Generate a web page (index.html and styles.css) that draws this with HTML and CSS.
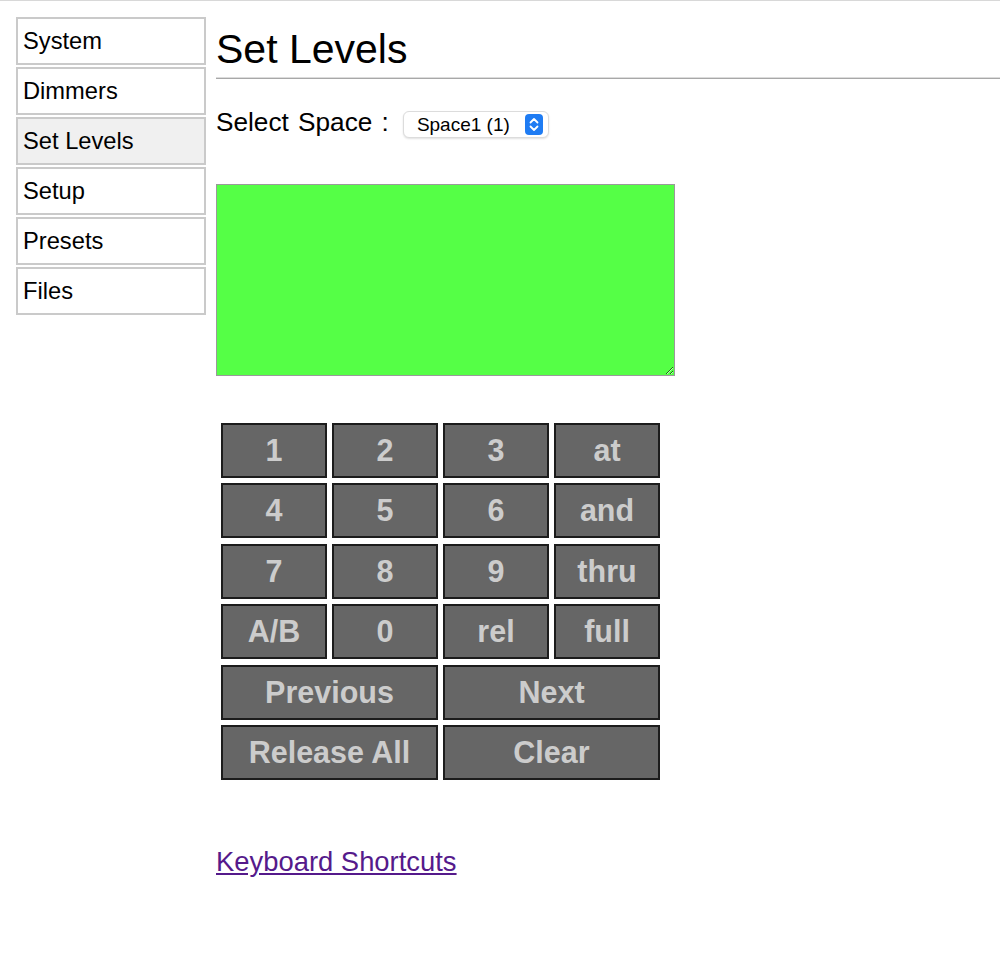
FILE: index.html
```html
<!DOCTYPE html>
<html lang="en">
<head>
    <meta charset="UTF-8">
    <meta name="viewport" content="width=device-width, initial-scale=1.0">
    <title>Set Levels</title>
    <link rel="stylesheet" href="styles.css">
</head>
<body>
    <div class="page">
        <ul class="nav">
            <li><a href="#">System</a></li>
            <li><a href="#">Dimmers</a></li>
            <li class="active"><a href="#">Set Levels</a></li>
            <li><a href="#">Setup</a></li>
            <li><a href="#">Presets</a></li>
            <li><a href="#">Files</a></li>
        </ul>
        <div class="main">
            <h1>Set Levels</h1>
            <hr>
            <div class="space-row">
                <label for="space">Select Space :</label>
                <div class="select-wrap">
                    <select id="space">
                        <option>Space1 (1)</option>
                    </select>
                    <svg class="stepper" width="18" height="21" viewBox="0 0 18 21">
                        <rect x="0" y="0" width="18" height="21" rx="4" fill="#1f7cf3"/>
                        <path d="M5.5 8.5 L9 5 L12.5 8.5" fill="none" stroke="#fff" stroke-width="1.8" stroke-linecap="round" stroke-linejoin="round"/>
                        <path d="M5.5 12.5 L9 16 L12.5 12.5" fill="none" stroke="#fff" stroke-width="1.8" stroke-linecap="round" stroke-linejoin="round"/>
                    </svg>
                </div>
            </div>
            <textarea class="display"></textarea>
            <div class="keypad">
                <button>1</button>
                <button>2</button>
                <button>3</button>
                <button>at</button>
                <button>4</button>
                <button>5</button>
                <button>6</button>
                <button>and</button>
                <button>7</button>
                <button>8</button>
                <button>9</button>
                <button>thru</button>
                <button>A/B</button>
                <button>0</button>
                <button>rel</button>
                <button>full</button>
                <button class="wide">Previous</button>
                <button class="wide">Next</button>
                <button class="wide">Release All</button>
                <button class="wide">Clear</button>
            </div>
            <a class="shortcuts" href="#">Keyboard Shortcuts</a>
        </div>
    </div>
</body>
</html>
```

FILE: styles.css
```css
body {
    margin: 0;
    font-family: "Liberation Sans", Arial, sans-serif;
    color: #000;
    background: #fff;
    border-top: 1px solid #d8d8d8;
    overflow: hidden;
}
.page {
    display: flex;
    align-items: flex-start;
}
.nav {
    list-style: none;
    margin: 16px 0 0 16px;
    padding: 0;
    width: 190px;
    display: flex;
    flex-direction: column;
    gap: 2px;
    flex-shrink: 0;
}
.nav li {
    height: 44px;
    border: 2px solid #cacaca;
    display: flex;
    align-items: center;
    padding-left: 5px;
}
.nav li.active {
    background: #f0f0f0;
}
.nav a {
    color: #000;
    text-decoration: none;
    font-size: 23.7px;
}
.main {
    flex: 1;
    margin-left: 10px;
    padding-top: 25px;
}
h1 {
    margin: 0;
    font-size: 41px;
    font-weight: normal;
    line-height: 47px;
}
hr {
    margin: 4px 0 0 0;
    border: none;
    border-top: 1px solid #dcdcdc;
    border-bottom: 1px solid #a8a8a8;
}
.space-row {
    margin-top: 28px;
    display: flex;
    align-items: center;
    gap: 14px;
    height: 30px;
}
.space-row label {
    font-size: 26.2px;
    line-height: 30px;
    word-spacing: 2px;
}
.select-wrap {
    position: relative;
    margin-top: 4px;
}
.select-wrap select {
    appearance: none;
    -webkit-appearance: none;
    width: 146px;
    height: 27px;
    padding: 0 0 0 13px;
    border: 1px solid #dcdcdc;
    border-radius: 6px;
    background: #fff;
    box-shadow: 0 1px 2px rgba(0, 0, 0, 0.12);
    font-family: "Liberation Sans", Arial, sans-serif;
    font-size: 19px;
    color: #000;
}
.stepper {
    position: absolute;
    right: 6px;
    top: 3px;
    pointer-events: none;
}
.display {
    display: block;
    margin-top: 47px;
    width: 459px;
    height: 192px;
    box-sizing: border-box;
    background: #55ff46;
    border: 1px solid #9a9a9a;
    padding: 2px;
}
.keypad {
    margin: 47px 0 0 5px;
    display: grid;
    grid-template-columns: repeat(4, 106px);
    grid-auto-rows: 55px;
    column-gap: 5px;
    row-gap: 5.4px;
}
.keypad button {
    background: #666;
    color: #cccccc;
    border: 2px solid #1c1c1c;
    font-family: "Liberation Sans", Arial, sans-serif;
    font-weight: bold;
    font-size: 30.5px;
    padding: 0;
    cursor: pointer;
}
.keypad button.wide {
    grid-column: span 2;
}
.shortcuts {
    display: inline-block;
    margin-top: 66px;
    font-size: 27.4px;
    line-height: 31px;
    color: #551a8b;
}
```
